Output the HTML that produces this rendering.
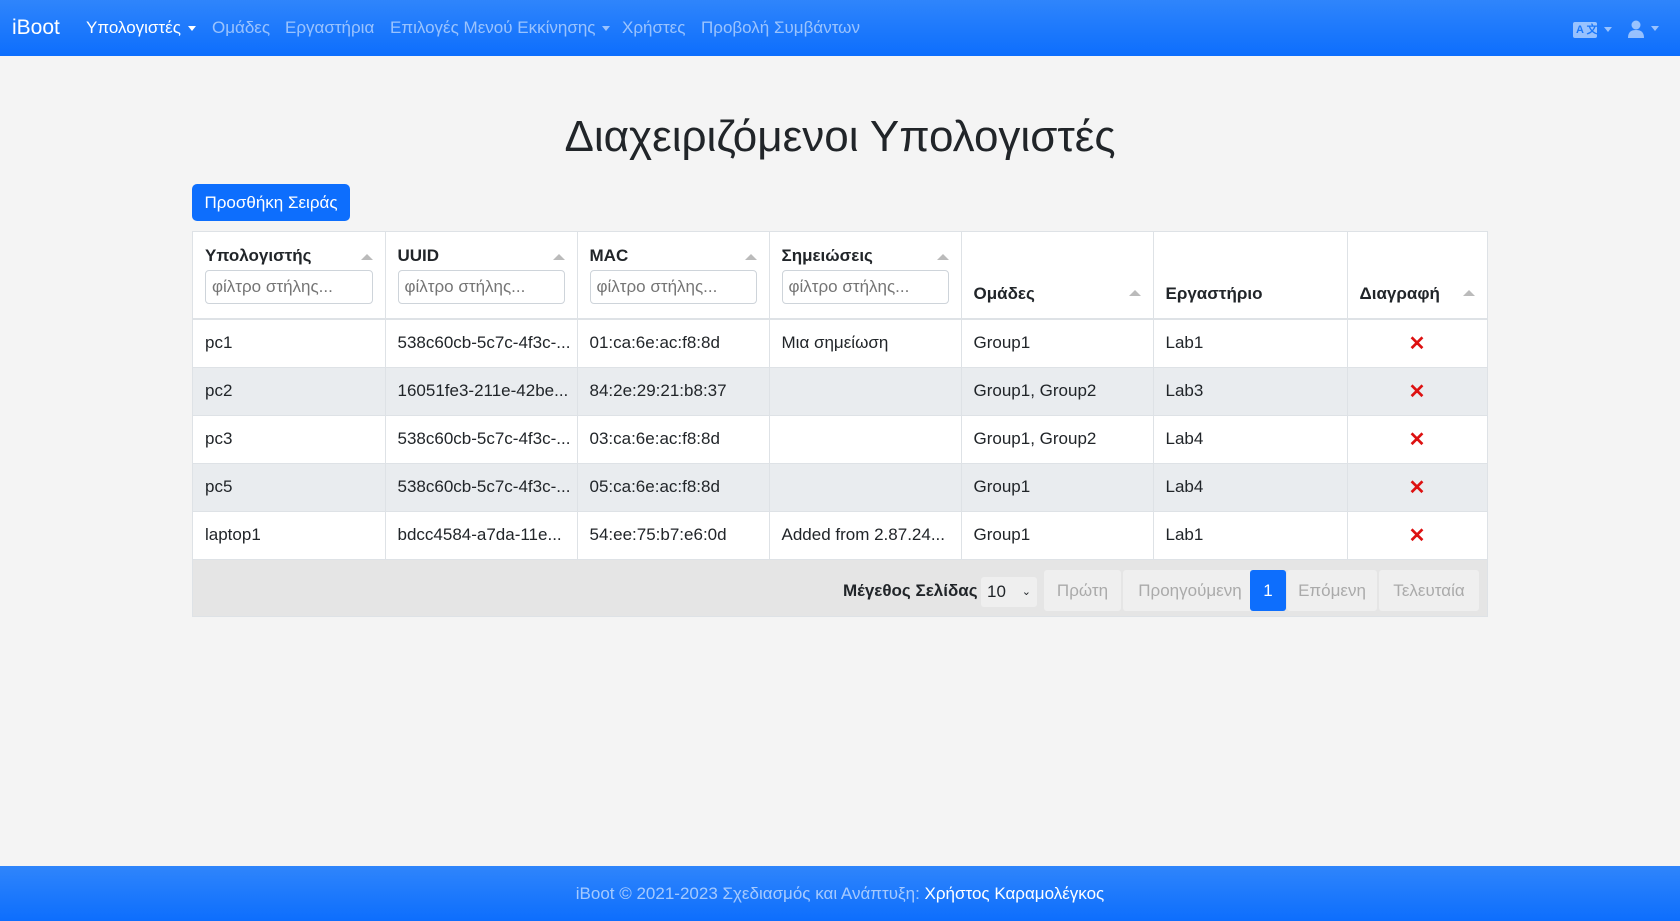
<!DOCTYPE html>
<html><head><meta charset="utf-8"><style>
*{box-sizing:border-box;margin:0;padding:0}
body{width:1680px;height:921px;background:#f4f4f4;font-family:"Liberation Sans","Noto Sans CJK SC",sans-serif;font-size:17px;color:#212529;position:relative;overflow:hidden}
.nav{position:absolute;left:0;top:0;width:1680px;height:56px;background:linear-gradient(#2f85fb,#0d6efd);color:#fff}
.nav span{position:absolute;top:18px;font-size:17px;color:rgba(255,255,255,.55);white-space:nowrap}
.nav .b{font-size:21px;color:#fff;top:16px;left:12px}
.car{display:inline-block;border-left:4px solid transparent;border-right:4px solid transparent;border-top:5px solid currentColor;vertical-align:middle;margin-left:7px}
h1{position:absolute;top:112px;left:0;width:1680px;text-align:center;font-weight:400;font-size:44px}
.btn{position:absolute;left:192px;top:184px;width:158px;height:37px;background:#0d6efd;color:#fff;border-radius:5px;font-size:17px;line-height:37px;text-align:center}
.tw{position:absolute;left:192px;top:231px;width:1296px;height:386px;border:1px solid #dee2e6;background:#e5e5e5}
table{border-collapse:collapse;table-layout:fixed;width:1294px;background:#fff}
th,td{border-right:1px solid #dee2e6;padding:0 12px;text-align:left;white-space:nowrap;overflow:hidden}
th{height:84px;vertical-align:bottom;padding-bottom:14px;font-weight:700;position:relative;border-bottom:2px solid #dee2e6}
th.f{vertical-align:top;padding-top:14px}
th .ar{position:absolute;right:12px;border-left:6px solid transparent;border-right:6px solid transparent;border-bottom:6px solid #bbb}
th.f .ar{top:22px}th:not(.f) .ar{bottom:22px}
th input{display:block;margin-top:4px;width:100%;height:34px;border:1px solid #ced4da;border-radius:4px;font:17px "Liberation Sans",sans-serif;padding:0 6px;color:#999}
td{height:48px;border-bottom:1px solid #dee2e6}
tr.g td{background:#e9ecef}
.x{color:#d11;font-weight:700;text-align:center;font-size:20px}
.pg{position:absolute;top:338px;height:41px;background:#efefef;color:#aaa;border-radius:3px;line-height:41px;text-align:center;font-size:17px}
.ft{position:absolute;left:0;top:866px;width:1680px;height:55px;background:linear-gradient(#2f85fb,#0d6efd);text-align:center;line-height:55px;color:rgba(255,255,255,.6);font-size:17px}
</style></head><body>
<div class="nav">
<span class="b">iBoot</span>
<span style="left:86px;color:#fff">Υπολογιστές<i class="car"></i></span>
<span style="left:212px">Ομάδες</span>
<span style="left:285px">Εργαστήρια</span>
<span style="left:390px">Επιλογές Μενού Εκκίνησης<i class="car"></i></span>
<span style="left:622px">Χρήστες</span>
<span style="left:701px">Προβολή Συμβάντων</span>
<span style="left:1573px;top:19px"><i style="display:inline-block;width:24px;height:16px;background:rgba(255,255,255,.55);border-radius:2px;vertical-align:middle;font:bold 11px 'Liberation Sans';font-style:normal;color:#1a78fc;line-height:16px;padding-left:3px">A 文</i><i class="car"></i></span>
<span style="left:1628px;top:18px"><svg width="16" height="18" viewBox="0 0 16 18" style="vertical-align:middle"><circle cx="8" cy="5" r="4.5" fill="rgba(255,255,255,.55)"/><path d="M0 18c0-6 3-8 8-8s8 2 8 8z" fill="rgba(255,255,255,.55)"/></svg><i class="car"></i></span>
</div>
<h1>Διαχειριζόμενοι Υπολογιστές</h1>
<div class="btn">Προσθήκη Σειράς</div>
<div class="tw"><table>
<colgroup><col style="width:192px"><col style="width:192px"><col style="width:192px"><col style="width:192px"><col style="width:192px"><col style="width:194px"><col style="width:140px"></colgroup>
<tr><th class="f">Υπολογιστής<i class="ar"></i><input placeholder="φίλτρο στήλης..."></th><th class="f">UUID<i class="ar"></i><input placeholder="φίλτρο στήλης..."></th><th class="f">MAC<i class="ar"></i><input placeholder="φίλτρο στήλης..."></th><th class="f">Σημειώσεις<i class="ar"></i><input placeholder="φίλτρο στήλης..."></th><th>Ομάδες<i class="ar"></i></th><th>Εργαστήριο</th><th>Διαγραφή<i class="ar"></i></th></tr>
<tr><td>pc1</td><td>538c60cb-5c7c-4f3c-...</td><td>01:ca:6e:ac:f8:8d</td><td>Μια σημείωση</td><td>Group1</td><td>Lab1</td><td class="x">✕</td></tr>
<tr class="g"><td>pc2</td><td>16051fe3-211e-42be...</td><td>84:2e:29:21:b8:37</td><td></td><td>Group1, Group2</td><td>Lab3</td><td class="x">✕</td></tr>
<tr><td>pc3</td><td>538c60cb-5c7c-4f3c-...</td><td>03:ca:6e:ac:f8:8d</td><td></td><td>Group1, Group2</td><td>Lab4</td><td class="x">✕</td></tr>
<tr class="g"><td>pc5</td><td>538c60cb-5c7c-4f3c-...</td><td>05:ca:6e:ac:f8:8d</td><td></td><td>Group1</td><td>Lab4</td><td class="x">✕</td></tr>
<tr><td>laptop1</td><td>bdcc4584-a7da-11e...</td><td>54:ee:75:b7:e6:0d</td><td>Added from 2.87.24...</td><td>Group1</td><td>Lab1</td><td class="x">✕</td></tr>
</table>
<div style="position:absolute;left:650px;top:349px;font-weight:700">Μέγεθος Σελίδας</div>
<div style="position:absolute;left:788px;top:345px;width:56px;height:30px;background:#efefef;border-radius:3px;padding-left:6px;line-height:30px">10 <span style="position:absolute;right:6px;font-size:11px">⌄</span></div>
<div class="pg" style="left:851px;width:77px">Πρώτη</div>
<div class="pg" style="left:930px;width:134px">Προηγούμενη</div>
<div class="pg" style="left:1057px;width:36px;background:#0d6efd;color:#fff">1</div>
<div class="pg" style="left:1094px;width:90px">Επόμενη</div>
<div class="pg" style="left:1186px;width:100px">Τελευταία</div>
</div>
<div class="ft">iBoot © 2021-2023 Σχεδιασμός και Ανάπτυξη: <span style="color:#fff">Χρήστος Καραμολέγκος</span></div>
</body></html>
